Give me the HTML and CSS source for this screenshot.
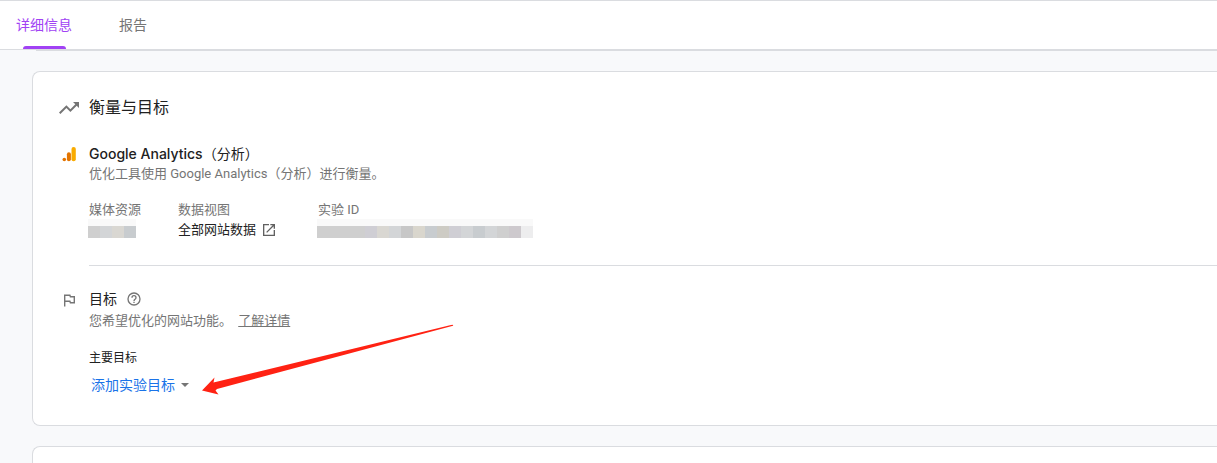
FILE: index.html
```html
<!DOCTYPE html>
<html lang="zh-CN">
<head>
<meta charset="utf-8">
<title>详细信息</title>
<link rel="stylesheet" href="styles.css">
</head>
<body>
<nav class="tabs">
  <a class="tab tab-active" href="#details">详细信息</a>
  <a class="tab" href="#report">报告</a>
</nav>
<main class="content" id="details">
  <section class="card">
    <header class="row card-head">
      <svg class="icon" width="24" height="24" viewBox="0 0 24 24"><path fill="#757575" d="M16 6l2.290 2.290-4.880 4.880-4-4L2 16.590 3.410 18l6-6 4 4 6.300-6.290L22 12V6z"/></svg>
      <h1 class="title">衡量与目标</h1>
    </header>
    <div class="row analytics">
      <svg class="icon" width="24" height="24" viewBox="0 0 24 24"><rect x="14.500" y="3" width="4.300" height="14.300" rx="2.100" fill="#f9ab00"/><rect x="9.900" y="8.200" width="4" height="9.100" rx="2" fill="#e37400"/><circle cx="7.300" cy="15.500" r="1.800" fill="#e37400"/></svg>
      <div class="body">
        <h2 class="subtitle"><span><span class="latin">Google Analytics</span>（分析）</span></h2>
        <p class="note">优化工具使用 Google Analytics（分析）进行衡量。</p>
        <dl class="facts">
          <div class="fact">
            <dt>媒体资源</dt>
            <dd class="mosaic"><i class="a"></i><i class="b"></i><i class="c"></i><i class="d"></i></dd>
          </div>
          <div class="fact">
            <dt>数据视图</dt>
            <dd class="view">全部网站数据
              <svg width="16" height="16" viewBox="0 0 24 24"><path fill="#616161" d="M19 19H5V5h7V3H3v18h18v-9h-2zM14 3v2h3.590l-9.830 9.830 1.410 1.410L19 6.410V10h2V3z"/></svg>
            </dd>
          </div>
          <div class="fact">
            <dt>实验 ID</dt>
            <dd class="mosaic"><i class="a"></i><i class="a"></i><i class="a"></i><i class="a"></i><i class="e"></i><i class="c"></i><i class="b"></i><i class="f"></i><i class="g"></i><i class="d"></i><i class="h"></i><i class="e"></i><i class="b"></i><i class="d"></i><i class="b"></i><i class="a"></i><i class="j"></i><i class="k"></i></dd>
          </div>
        </dl>
      </div>
    </div>
    <div class="row goals">
      <svg class="icon" width="24" height="24" viewBox="0 0 24 24"><path fill="none" stroke="#757575" stroke-width="1.400" d="M7.700 17.500V6.200h5.200l.5 1.500h3.900v6.100h-3.900l-.5-1.500H7.700"/></svg>
      <div class="body">
        <h2 class="subtitle">目标
          <svg width="16" height="16" viewBox="0 0 24 24"><path fill="#757575" d="M11 18h2v-2h-2zm1-16a10 10 0 1 0 0 20 10 10 0 0 0 0-20zm0 18a8 8 0 1 1 0-16 8 8 0 0 1 0 16zm0-14a4 4 0 0 0-4 4h2a2 2 0 0 1 4 0c0 2-3 1.750-3 5h2c0-2.250 3-2.500 3-5a4 4 0 0 0-4-4z"/></svg>
        </h2>
        <p class="note">您希望优化的网站功能。 <a class="learn" href="#help">了解详情</a></p>
        <h3 class="label">主要目标</h3>
        <button class="add" type="button">添加实验目标
          <svg width="8" height="4" viewBox="0 0 8 4"><path fill="#757575" d="M0 0h8L4 4z"/></svg>
        </button>
      </div>
    </div>
    <svg class="pointer" width="252" height="72" viewBox="0 0 252 72"><path fill="#ff2213" d="M0 66.500L12.500 53.500 11.500 58.500 248 1.200q4-1 3 .5L15 65l-1.500 1.500 3 4z"/></svg>
  </section>
  <section class="card card-next"></section>
</main>
</body>
</html>
```
FILE: styles.css
```css
* { box-sizing: border-box; }
body {
  margin: 0;
  min-height: 100vh;
  background: #f8f9fb;
  color: #212121;
  font: 13px/20px Roboto, "Noto Sans CJK SC", sans-serif;
}
h1, h2, h3, p, dl, dd { margin: 0; font-weight: 400; }
svg { flex: none; }
.tabs {
  display: flex;
  gap: 47px;
  height: 50px;
  padding-left: 16px;
  background: #fff;
  border-top: 1px solid #dadce0;
  border-bottom: 1px solid #dadce0;
}
.tab {
  position: relative;
  color: #757575;
  font-size: 14px;
  line-height: 48px;
  text-decoration: none;
}
.tab-active { color: #a142f4; }
.tab-active::after {
  content: "";
  position: absolute;
  right: 6px;
  bottom: 0;
  left: 7px;
  height: 3px;
  border-radius: 3px 3px 0 0;
  background: #a142f4;
}
.content {
  display: flex;
  flex-direction: column;
  gap: 20px;
  padding-left: 32px;
}
.content::before {
  content: "";
  height: 1px;
  margin-left: 4px;
  background: #dadce0;
}
.card {
  position: relative;
  padding: 24px 0 30px 24px;
  background: #fff;
  border: 1px solid #dadce0;
  border-right: 0;
  border-radius: 8px 0 0 8px;
}
.card-next {
  padding: 16px 0 0;
  border-bottom: 0;
  border-radius: 8px 0 0 0;
}
.row { display: flex; gap: 8px; }
.body { flex: 1; }
.card-head { align-items: center; }
.title { font-size: 16px; line-height: 24px; }
.analytics { padding-top: 24px; }
.subtitle {
  display: flex;
  align-items: center;
  gap: 9px;
  font-size: 14px;
  line-height: 20px;
}
.latin { font-family: Inter, sans-serif; font-weight: 500; }
.note { color: #757575; }
.analytics .body { border-bottom: 1px solid #dadce0; }
.facts { display: flex; gap: 37px; padding: 16px 0 25px; }
.fact:nth-child(3) { margin-left: 4px; }
dt { color: #757575; }
.view { display: flex; align-items: center; gap: 5px; }
.mosaic { display: flex; margin: -1px; }
.mosaic i {
  width: 12px;
  height: 19px;
  border-top: 7px solid #f9f9f9;
}
.a { background: #cfcfcf; }
.b { background: #d3d5d7; }
.c { background: #d9d7d2; }
.d { background: #c8cccf; }
.e { background: #cfced4; }
.f { background: #c7c7c7; }
.g { background: #d9d6cd; }
.h { background: #cdcbc4; }
.j { background: #cdc9cd; }
.k { background: #ededee; }
.goals { padding-top: 23px; }
.goals .note { padding-top: 2px; }
.learn { margin-left: 3px; color: #757575; }
.label { padding-top: 17px; font-size: 12px; }
.add {
  display: flex;
  align-items: center;
  gap: 6px;
  margin-top: 7px;
  padding: 0 2px;
  border: 0;
  background: none;
  color: #1a73e8;
  font: inherit;
  font-size: 14px;
}
.pointer { position: absolute; top: 252px; left: 169px; }
```
